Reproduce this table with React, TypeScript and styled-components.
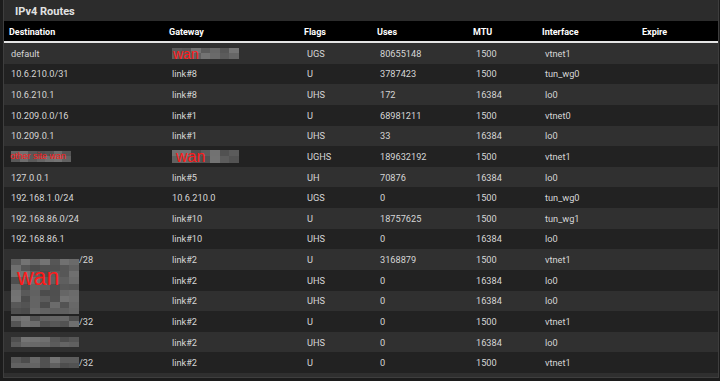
import React from 'react'
import styled, { createGlobalStyle } from 'styled-components'

const GlobalStyle = createGlobalStyle`
  body {
    margin: 0;
    background: #1c1c1c;
    font-family: Roboto, "Liberation Sans", sans-serif;
  }
`

const COLS = '161px 135px 73px 96px 69px 100px 80px'

const Panel = styled.section`
  margin: 0 1px 0 3px;
  border: 1px solid #3e3e3e;
  border-top: none;
  background: #2f2f2f;
  padding-bottom: 4px;
`

const Heading = styled.h2`
  margin: 0;
  height: 21px;
  box-sizing: border-box;
  padding: 2px 0 0 11px;
  display: flex;
  align-items: center;
  background: #2c2c2c;
  color: #e2e2e2;
  font-size: 11px;
  font-weight: 700;
`

const HeadRow = styled.div`
  display: grid;
  grid-template-columns: ${COLS};
  height: 20px;
  align-items: center;
  background: #000;
  border-bottom: 2px solid #e4e4e4;
`

const HeadCell = styled.div<{ $first?: boolean }>`
  padding: 2px 0 0 ${({ $first }) => ($first ? 5 : 4)}px;
  color: #fff;
  font-size: 9px;
  font-weight: 700;
`

const Row = styled.div<{ $odd: boolean }>`
  display: grid;
  grid-template-columns: ${COLS};
  height: 20.625px;
  align-items: center;
  background: ${({ $odd }) => ($odd ? '#303030' : '#222222')};
`

const Cell = styled.div`
  position: relative;
  display: flex;
  align-items: center;
  padding-left: 7px;
  color: #d6d6d6;
  font-size: 9.2px;
  white-space: nowrap;
`

const Box = styled.div<{ $w: number; $h: number; $float?: boolean }>`
  position: ${({ $float }) => ($float ? 'absolute' : 'relative')};
  top: ${({ $float }) => ($float ? '5px' : 'auto')};
  left: ${({ $float }) => ($float ? '7px' : 'auto')};
  z-index: ${({ $float }) => ($float ? 2 : 'auto')};
  width: ${({ $w }) => $w}px;
  height: ${({ $h }) => $h}px;
  display: grid;
  grid-template-columns: repeat(7, 1fr);
  grid-auto-rows: 1fr;
  flex-shrink: 0;
`

const Pixel = styled.div<{ $shade: number }>`
  background: ${({ $shade }) => `rgb(${$shade},${$shade},${$shade})`};
`

const Spacer = styled.span<{ $w: number }>`
  display: inline-block;
  width: ${({ $w }) => $w}px;
`

const RedLabel = styled.span<{ $size: number; $x: number; $y: number }>`
  position: absolute;
  left: ${({ $x }) => $x}px;
  top: ${({ $y }) => $y}px;
  color: #ff1a1a;
  font-family: "Liberation Sans", Arial, sans-serif;
  font-size: ${({ $size }) => $size}px;
  line-height: 1;
  white-space: nowrap;
`

function shades(seed: number, count: number) {
  const out: number[] = []
  let s = seed
  for (let i = 0; i < count; i++) {
    s = (s * 9301 + 49297) % 233280
    out.push(76 + Math.floor((s / 233280) * 42))
  }
  return out
}

type Label = { text: string; size: number; x: number; y: number }

function Redact({ w, h, rows, seed, label, float }: { w: number; h: number; rows: number; seed: number; label?: Label; float?: boolean }) {
  return (
    <Box $w={w} $h={h} $float={float}>
      {shades(seed, rows * 7).map((v, i) => (
        <Pixel key={i} $shade={v} />
      ))}
      {label && (
        <RedLabel $size={label.size} $x={label.x} $y={label.y}>
          {label.text}
        </RedLabel>
      )}
    </Box>
  )
}

type Route = {
  dest: React.ReactNode
  gw: React.ReactNode
  flags: string
  uses: string
  mtu: string
  iface: string
}

const wanGw = (seed: number, h: number, size: number, x: number, y: number) => (
  <Redact w={67} h={h} rows={2} seed={seed} label={{ text: 'wan', size, x, y }} />
)

const hidden = (seed: number, tail = '') => (
  <>
    <Redact w={68} h={10.5} rows={2} seed={seed} />
    {tail && <span>{tail}</span>}
  </>
)

const routes: Route[] = [
  { dest: 'default', gw: wanGw(3, 11.5, 14, 1, -0.5), flags: 'UGS', uses: '80655148', mtu: '1500', iface: 'vtnet1' },
  { dest: '10.6.210.0/31', gw: 'link#8', flags: 'U', uses: '3787423', mtu: '1500', iface: 'tun_wg0' },
  { dest: '10.6.210.1', gw: 'link#8', flags: 'UHS', uses: '172', mtu: '16384', iface: 'lo0' },
  { dest: '10.209.0.0/16', gw: 'link#1', flags: 'U', uses: '68981211', mtu: '1500', iface: 'vtnet0' },
  { dest: '10.209.0.1', gw: 'link#1', flags: 'UHS', uses: '33', mtu: '16384', iface: 'lo0' },
  {
    dest: <Redact w={60} h={10.5} rows={2} seed={11} label={{ text: 'other site wan', size: 9, x: -1, y: 1 }} />,
    gw: wanGw(17, 13, 16, 4, -1),
    flags: 'UGHS', uses: '189632192', mtu: '1500', iface: 'vtnet1',
  },
  { dest: '127.0.0.1', gw: 'link#5', flags: 'UH', uses: '70876', mtu: '16384', iface: 'lo0' },
  { dest: '192.168.1.0/24', gw: '10.6.210.0', flags: 'UGS', uses: '0', mtu: '1500', iface: 'tun_wg0' },
  { dest: '192.168.86.0/24', gw: 'link#10', flags: 'U', uses: '18757625', mtu: '1500', iface: 'tun_wg1' },
  { dest: '192.168.86.1', gw: 'link#10', flags: 'UHS', uses: '0', mtu: '16384', iface: 'lo0' },
  {
    dest: (
      <>
        <Redact w={68} h={55} rows={9} seed={29} float label={{ text: 'wan', size: 23, x: 6, y: 7 }} />
        <Spacer $w={68} />
        <span>/28</span>
      </>
    ),
    gw: 'link#2', flags: 'U', uses: '3168879', mtu: '1500', iface: 'vtnet1',
  },
  { dest: '', gw: 'link#2', flags: 'UHS', uses: '0', mtu: '16384', iface: 'lo0' },
  { dest: '', gw: 'link#2', flags: 'UHS', uses: '0', mtu: '16384', iface: 'lo0' },
  { dest: hidden(41, '/32'), gw: 'link#2', flags: 'U', uses: '0', mtu: '1500', iface: 'vtnet1' },
  { dest: hidden(47), gw: 'link#2', flags: 'UHS', uses: '0', mtu: '16384', iface: 'lo0' },
  { dest: hidden(53, '/32'), gw: 'link#2', flags: 'U', uses: '0', mtu: '1500', iface: 'vtnet1' },
]

const headers = ['Destination', 'Gateway', 'Flags', 'Uses', 'MTU', 'Interface', 'Expire']

export default function App() {
  return (
    <>
      <GlobalStyle />
      <Panel>
        <Heading>IPv4 Routes</Heading>
        <HeadRow>
          {headers.map((h, i) => (
            <HeadCell key={h} $first={i === 0}>{h}</HeadCell>
          ))}
        </HeadRow>
        {routes.map((r, i) => (
          <Row key={i} $odd={i % 2 === 0}>
            <Cell>{r.dest}</Cell>
            <Cell>{r.gw}</Cell>
            <Cell>{r.flags}</Cell>
            <Cell>{r.uses}</Cell>
            <Cell>{r.mtu}</Cell>
            <Cell>{r.iface}</Cell>
            <Cell />
          </Row>
        ))}
      </Panel>
    </>
  )
}
